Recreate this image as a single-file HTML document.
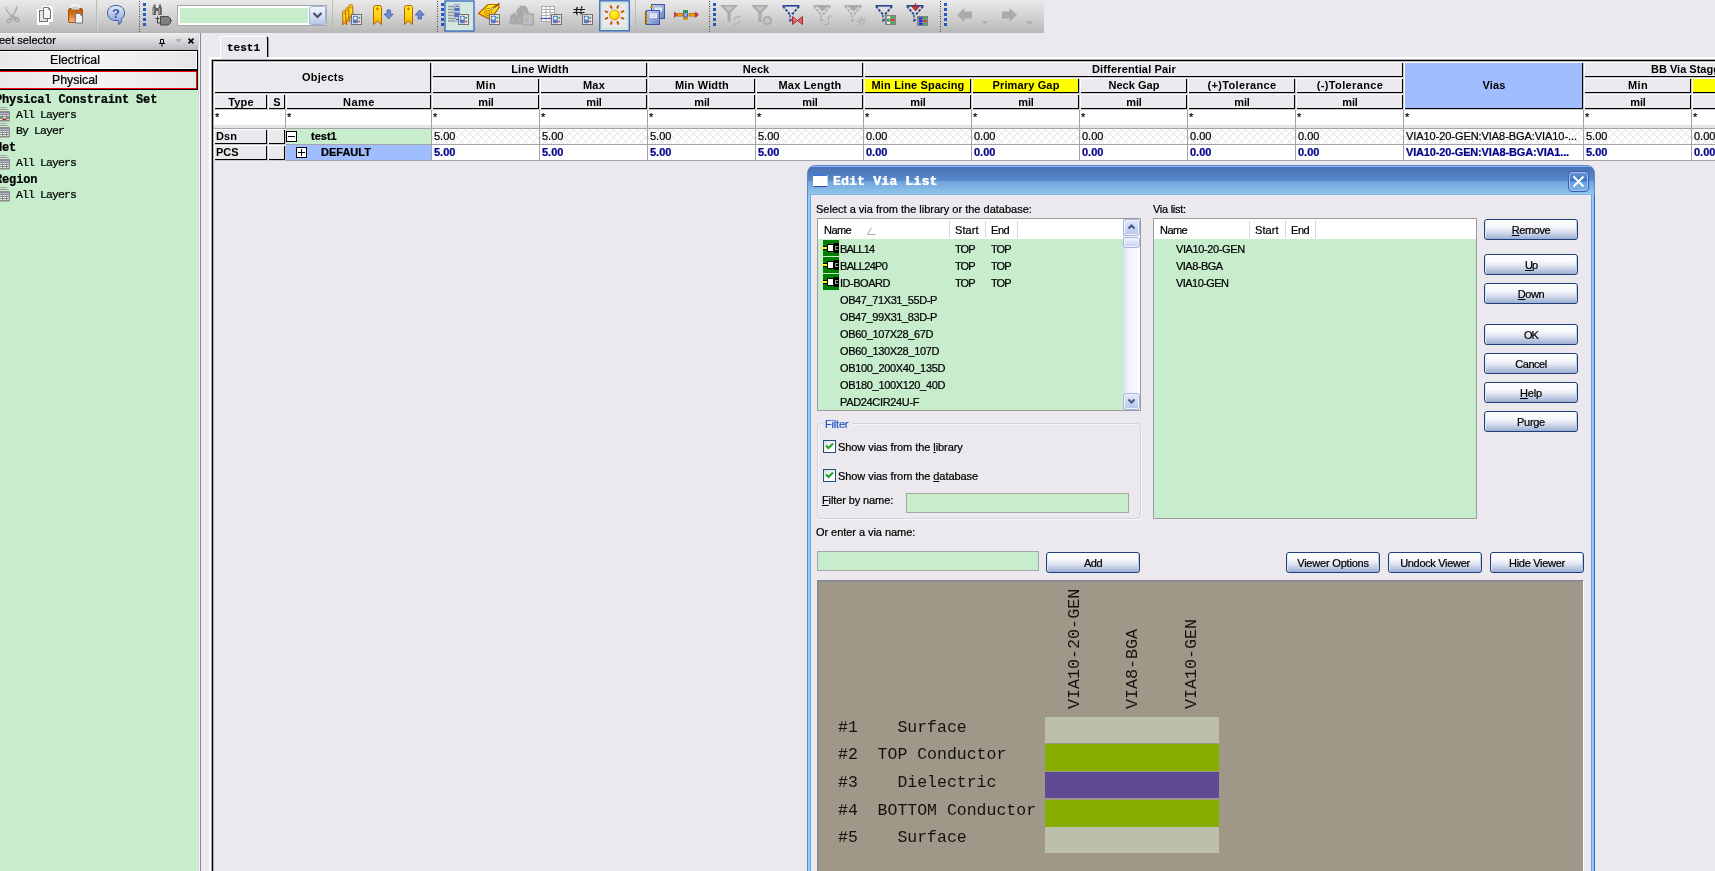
<!DOCTYPE html>
<html><head><meta charset="utf-8"><title>Constraint Manager</title>
<style>
*{box-sizing:border-box;margin:0;padding:0}
html,body{width:1715px;height:871px;overflow:hidden;background:#ebe9ed;font-family:"Liberation Sans",sans-serif;font-size:11px;color:#000}
.a{position:absolute}
.t{position:absolute;white-space:nowrap;line-height:1}
.t,.btn,.lbtn{-webkit-text-stroke:0.22px currentColor}
.mono{font-family:"Liberation Mono",monospace}
.b{font-weight:bold}
/* toolbar */
#tb{left:0;top:0;width:1044px;height:33px;background:linear-gradient(#e9e9e9 0%,#dcdcdc 30%,#c8c8c8 70%,#b7b7b7 100%)}
/* left pane */
#lp{left:0;top:33px;width:199px;height:838px;background:#c7edcc}
#lph{left:0;top:33px;width:199px;height:17px;background:linear-gradient(#eeeef0,#d6d6da 50%,#b8b8bc)}
.lbtn{left:-2px;width:200px;background:linear-gradient(90deg,#e8e8ea,#f4f4f6 50%,#e6e6e8);text-align:center;font-size:13px}
/* grid */
.hc{position:absolute;background:#ebe9ed;border-top:1px solid #fff;border-left:1px solid #fff;border-bottom:1px solid #c8c8cc;border-right:1px solid #c8c8cc;box-shadow:inset -1px -1px 0 0 #000;text-align:center;font-weight:bold;font-size:11px;white-space:nowrap;overflow:hidden}
.hy{background:#ffff00}
.hv{background:#a0bdff}
.fc{position:absolute;background:#fff;border-right:1px solid #a0a0a0;border-bottom:1px solid #b8b8b8;font-size:11px}
.dc{position:absolute;border-right:1px solid #a8a8a8;border-bottom:1px solid #a8a8a8;font-size:11px;padding-left:2px;white-space:nowrap;overflow:hidden}
.hatch{background-color:#fff;background-image:repeating-linear-gradient(45deg,transparent 0,transparent 4.95px,#dedede 4.95px,#dedede 5.66px),repeating-linear-gradient(-45deg,transparent 0,transparent 4.95px,#dedede 4.95px,#dedede 5.66px)}
.nv{color:#00008b;font-weight:bold;background:#fff}
/* dialog */
.btn{position:absolute;border:1px solid #1c3f7c;border-radius:3px;background:linear-gradient(#ffffff 0%,#f6f7fb 35%,#e2e7f2 55%,#bcc8e2 80%,#9eaed2 100%);text-align:center;font-size:11px;box-shadow:inset 0 1px 0 0 #fff,inset 1px 0 0 0 #e4e8f2,inset -1px 0 0 0 #c4cce0}
.lv{position:absolute;background:#c7edcc;border:1px solid #9c9c9c}
.inp{position:absolute;background:#c7edcc;border:1px solid #a5a5a5}
u{text-decoration:underline}
#root{position:absolute;left:0;top:0;width:1715px;height:871px;overflow:hidden;will-change:transform;transform:translateZ(0)}
</style></head><body><div id="root">

<div class="a" id="tb"></div>
<svg class="a" style="left:0;top:0" width="1044" height="33" viewBox="0 0 1044 33">
<defs>
<linearGradient id="gy" x1="0" y1="0" x2="0" y2="1"><stop offset="0" stop-color="#fff020"/><stop offset="0.6" stop-color="#ffd010"/><stop offset="1" stop-color="#f0a000"/></linearGradient>
<linearGradient id="gb" x1="0" y1="0" x2="0" y2="1"><stop offset="0" stop-color="#e8eefc"/><stop offset="1" stop-color="#7f9ad4"/></linearGradient>
<linearGradient id="gbr" x1="0" y1="0" x2="0" y2="1"><stop offset="0" stop-color="#b85808"/><stop offset="0.5" stop-color="#d87820"/><stop offset="1" stop-color="#f4c090"/></linearGradient>
<linearGradient id="gdd" x1="0" y1="0" x2="0" y2="1"><stop offset="0" stop-color="#f4f7fd"/><stop offset="0.5" stop-color="#d8e2f4"/><stop offset="1" stop-color="#b4c6e6"/></linearGradient>
<linearGradient id="gnb" x1="0" y1="0" x2="1" y2="1"><stop offset="0" stop-color="#c4d0f0"/><stop offset="1" stop-color="#6f86c4"/></linearGradient>
<radialGradient id="gsun" cx="0.4" cy="0.35" r="0.7"><stop offset="0" stop-color="#fff840"/><stop offset="0.7" stop-color="#ffd800"/><stop offset="1" stop-color="#f0a000"/></radialGradient>
</defs>
<g stroke="#a8aaac" fill="none" stroke-width="1.2"><path d="M6 7Q6 12 13 17"/><path d="M17 6Q17 12 10 17"/><path d="M16 7.5l-1.5 3" stroke-dasharray="1 1"/></g>
<g fill="#a8aaac"><ellipse cx="9.5" cy="20.5" rx="3.2" ry="2.4" transform="rotate(-35 9.5 20.5)"/><ellipse cx="16.5" cy="19.5" rx="3.4" ry="2.4" transform="rotate(35 16.5 19.5)"/><path d="M10 18.500l3.500 -3.500l3 3.500Z"/></g><circle cx="9.3" cy="20.8" r="0.9" fill="#d4d4d4"/><circle cx="17.2" cy="19.8" r="0.9" fill="#d4d4d4"/>
<path d="M37 9h5V6h9l2 2v14h-4v3H37Z" fill="#fff"/>
<rect x="39.5" y="10.5" width="8" height="11" fill="#e4e4e4" stroke="#707070"/>
<path d="M43.5 7.5h5l2 2v9h-7Z" fill="#f4f4f4" stroke="#707070"/><path d="M48.5 7.5v2h2" fill="none" stroke="#707070" stroke-width="0.8"/>
<path d="M71 8Q71 4.5 75.5 4.5Q80 4.5 80 8Z" fill="#fff" opacity="0.9"/>
<rect x="68.5" y="8.5" width="14" height="14" rx="1.5" fill="url(#gbr)" stroke="#a85000"/>
<path d="M71.5 9.5Q71.5 6.5 75.5 6.5Q79.5 6.5 79.5 9.5Z" fill="#d8d8d8" stroke="#b0b0b0" stroke-width="0.6"/>
<path d="M75.5 13.5h5l2 2v7.5h-7Z" fill="#f4f4f4" stroke="#787878"/><path d="M80.5 13.5v2h2" fill="none" stroke="#787878" stroke-width="0.8"/>
<rect x="96" y="0" width="1" height="31" fill="#b4c0b4"/><rect x="97" y="0" width="1" height="31" fill="#dcdcdc" opacity="0.6"/>
<path d="M116 5.5C121.5 5.5 124.5 9 124.5 13C124.5 16 123 18 121 19.2Q123 22 118.5 24.5Q119.5 22 118 20.3Q117 20.5 116 20.5C110.5 20.5 107.5 17 107.5 13C107.5 9 110.5 5.5 116 5.5Z" fill="url(#gb)" stroke="#3c5ca0" stroke-width="1"/>
<text x="116" y="18" font-family="Liberation Sans" font-weight="bold" font-size="13" text-anchor="middle" fill="#3c58a8">?</text>
<path d="M139.5 1V32" stroke="#404040" stroke-width="1" stroke-dasharray="1 1.5"/>
<g transform="translate(143,0)"><rect x="0" y="3" width="3" height="3" fill="#2858c0"/><rect x="0" y="8" width="3" height="3" fill="#2858c0"/><rect x="0" y="13" width="3" height="3" fill="#2858c0"/><rect x="0" y="18" width="3" height="3" fill="#2858c0"/><rect x="0" y="23" width="3" height="3" fill="#2858c0"/></g>
<g fill="#606060"><rect x="152.5" y="7" width="3.6" height="8" rx="0.8"/><rect x="158.2" y="7" width="3.6" height="8" rx="0.8"/><rect x="153.5" y="4.5" width="2" height="3"/><rect x="159" y="4.5" width="2" height="3"/><rect x="156" y="8" width="2.4" height="3"/></g>
<path d="M153.6 8v6M159.4 8v6" stroke="#b0b0b0" stroke-width="0.9"/>
<path d="M155.5 18.5h4M157.5 16.5v6.5h3" stroke="#404040" stroke-width="1" fill="none"/>
<path d="M160.5 16.5h7.5l2.5 2v4.5l-2.5 2h-7.5Z" fill="#808080" stroke="#484848"/><path d="M170.5 20.5h1.5" stroke="#484848"/>
<rect x="177.5" y="5.5" width="149" height="20" fill="#fff" stroke="#a4a8ac"/>
<rect x="180" y="8" width="128" height="15" fill="#c7edcc"/>
<rect x="309.5" y="6.5" width="16" height="18" rx="2" fill="url(#gdd)" stroke="#a0b4d8"/>
<path d="M313.5 13L317.5 17L321.5 13" stroke="#485068" stroke-width="2.2" fill="none"/>
<rect x="332" y="0" width="1" height="31" fill="#b4c0b4"/>
<g transform="translate(342.5,10.5) scale(0.5,0.74)"><path d="M0.5 2.5Q0.5 0.5 2.5 0.5H6.5Q8.5 0.5 8.5 2.5V19.5L4.5 16L0.5 19.5Z" fill="url(#gy)" stroke="#b86400" stroke-width="1" vector-effect="non-scaling-stroke"/><path d="M4.5 2.3v3M3 3.8h3" stroke="#d07800" stroke-width="1.2"/></g>
<g transform="translate(345.5,7.5) scale(0.5,0.74)"><path d="M0.5 2.5Q0.5 0.5 2.5 0.5H6.5Q8.5 0.5 8.5 2.5V19.5L4.5 16L0.5 19.5Z" fill="url(#gy)" stroke="#b86400" stroke-width="1" vector-effect="non-scaling-stroke"/><path d="M4.5 2.3v3M3 3.8h3" stroke="#d07800" stroke-width="1.2"/></g>
<g transform="translate(348.5,4.5) scale(0.5,0.74)"><path d="M0.5 2.5Q0.5 0.5 2.5 0.5H6.5Q8.5 0.5 8.5 2.5V19.5L4.5 16L0.5 19.5Z" fill="url(#gy)" stroke="#b86400" stroke-width="1" vector-effect="non-scaling-stroke"/><path d="M4.5 2.3v3M3 3.8h3" stroke="#d07800" stroke-width="1.2"/></g>
<g transform="translate(351,14)"><g transform="scale(0.9167)"><rect x="0.5" y="0.5" width="11" height="11" fill="#e8e8ec" stroke="#686868"/><rect x="2" y="2" width="5.5" height="8" rx="1" fill="#5a78c0"/><circle cx="4.7" cy="4.5" r="1.7" fill="#e8ecf8"/><path d="M9 3v2.4M7.8 4.2h2.4" stroke="#20b040" stroke-width="1.1"/><path d="M9 7v2.4M7.8 8.2h2.4" stroke="#e04040" stroke-width="1.1"/></g></g>
<g transform="translate(373,5)"><path d="M0.5 2.5Q0.5 0.5 2.5 0.5H6.5Q8.5 0.5 8.5 2.5V19.5L4.5 16L0.5 19.5Z" fill="url(#gy)" stroke="#b86400" stroke-width="1" vector-effect="non-scaling-stroke"/><path d="M4.5 2.3v3M3 3.8h3" stroke="#d07800" stroke-width="1.2"/></g>
<path d="M387 10h3.4v4h2.8l-4.5 5l-4.5 -5h2.8Z" fill="#6c8cd0" stroke="#3c5ca8" stroke-width="0.8"/>
<g transform="translate(404,5)"><path d="M0.5 2.5Q0.5 0.5 2.5 0.5H6.5Q8.5 0.5 8.5 2.5V19.5L4.5 16L0.5 19.5Z" fill="url(#gy)" stroke="#b86400" stroke-width="1" vector-effect="non-scaling-stroke"/><path d="M4.5 2.3v3M3 3.8h3" stroke="#d07800" stroke-width="1.2"/></g>
<path d="M418 19h3.4v-4h2.8l-4.5 -5l-4.5 5h2.8Z" fill="#6c8cd0" stroke="#3c5ca8" stroke-width="0.8"/>
<path d="M437.5 1V32" stroke="#404040" stroke-width="1" stroke-dasharray="1 1.5"/>
<g transform="translate(441,0)"><rect x="0" y="3" width="3" height="3" fill="#2858c0"/><rect x="0" y="8" width="3" height="3" fill="#2858c0"/><rect x="0" y="13" width="3" height="3" fill="#2858c0"/><rect x="0" y="18" width="3" height="3" fill="#2858c0"/><rect x="0" y="23" width="3" height="3" fill="#2858c0"/></g>
<rect x="445" y="1" width="29" height="30" fill="#d2e8de" stroke="#2c5cc0" stroke-width="1.2"/>
<path d="M448 6.5h7M448 9.5h7M448 12.500h7M448 15.500h7M448 18.500h7M448 21h7" stroke="#989898" stroke-width="1.4"/>
<rect x="454.5" y="4.500" width="5" height="17" fill="#c8d4f0" stroke="#8098d0" stroke-width="0.6"/><rect x="454.500" y="8" width="5" height="9" fill="#5070b8"/><rect x="454.500" y="11" width="5" height="1.5" fill="#c8d4f0"/>
<path d="M455.500 7.300l1.500 -1.500l1.500 1.500M455.500 18.500l1.500 1.500l1.500 -1.500" stroke="#304880" stroke-width="0.9" fill="none"/>
<g transform="translate(458,14)"><g transform="scale(0.9167)"><rect x="0.5" y="0.5" width="11" height="11" fill="#e8e8ec" stroke="#686868"/><rect x="2" y="2" width="5.5" height="8" rx="1" fill="#5a78c0"/><circle cx="4.7" cy="4.5" r="1.7" fill="#e8ecf8"/><path d="M9 3v2.4M7.8 4.2h2.4" stroke="#20b040" stroke-width="1.1"/><path d="M9 7v2.4M7.8 8.2h2.4" stroke="#e04040" stroke-width="1.1"/></g></g>
<path d="M478.500 13.500L488 4.500H497L499.500 7L490 19.500Z" fill="url(#gy)" stroke="#b86400" stroke-width="1.2"/>
<circle cx="488" cy="12" r="3.600" fill="none" stroke="#c88000" stroke-width="0.9"/><circle cx="488" cy="12" r="1.600" fill="none" stroke="#c88000" stroke-width="0.9"/>
<path d="M493 8L499.500 3.500" stroke="#a05800" stroke-width="1.8"/><circle cx="492.500" cy="8.500" r="1.200" fill="#e8e8e8" stroke="#806040" stroke-width="0.6"/>
<g transform="translate(489,14)"><g transform="scale(0.9167)"><rect x="0.5" y="0.5" width="11" height="11" fill="#e8e8ec" stroke="#686868"/><rect x="2" y="2" width="5.5" height="8" rx="1" fill="#5a78c0"/><circle cx="4.7" cy="4.5" r="1.7" fill="#e8ecf8"/><path d="M9 3v2.4M7.8 4.2h2.4" stroke="#20b040" stroke-width="1.1"/><path d="M9 7v2.4M7.8 8.2h2.4" stroke="#e04040" stroke-width="1.1"/></g></g>
<path d="M519 6.500Q520 5 522 5.500L525.500 6Q527 6.500 527.500 8.500L529 13L532.500 14.500V24.500H511Q509 24.500 509.300 22L510 17Q510.500 14.500 513 13.500L515.500 12.500Z" fill="#a8aaac"/>
<g transform="translate(522,13.500)"><rect x="0.5" y="0.5" width="11" height="11" fill="#b4b6b8" stroke="#a4a6a8"/><rect x="2.5" y="2.5" width="5" height="7" fill="none" stroke="#c4c6c8"/><path d="M9 3v2.4M7.8 4.2h2.4M9 7v2.4M7.8 8.2h2.4" stroke="#c4c6c8" stroke-width="1"/></g>
<circle cx="519.500" cy="7.500" r="0.700" fill="#d0d0d0"/><rect x="515" y="13" width="3" height="1.500" fill="#c4c6c8"/><circle cx="512.500" cy="19.500" r="0.600" fill="#c8c8c8"/><circle cx="519" cy="19.500" r="0.600" fill="#c8c8c8"/><rect x="523" y="13" width="3" height="1" fill="#c4c6c8"/>
<rect x="541.500" y="6.500" width="13" height="15" fill="#fff" stroke="#a8a8a8"/><path d="M541.500 9.500h13M541.500 12.500h13M541.500 15.500h13M541.500 18.500h13M546 6.500v15M550 6.500v15" stroke="#b0b0b0" stroke-width="1"/>
<path d="M540.500 18.500H552" stroke="#3858b0" stroke-width="1.200"/>
<g transform="translate(551,14)"><g transform="scale(0.9167)"><rect x="0.5" y="0.5" width="11" height="11" fill="#e8e8ec" stroke="#686868"/><rect x="2" y="2" width="5.5" height="8" rx="1" fill="#5a78c0"/><circle cx="4.7" cy="4.5" r="1.7" fill="#e8ecf8"/><path d="M9 3v2.4M7.8 4.2h2.4" stroke="#20b040" stroke-width="1.1"/><path d="M9 7v2.4M7.8 8.2h2.4" stroke="#e04040" stroke-width="1.1"/></g></g>
<path d="M573.500 9.500H585M573 12.500H584.500" stroke="#202020" stroke-width="1.100"/><path d="M577.500 7Q575.500 11 577.500 15.500M582 6.500Q580 11 581.500 15" stroke="#202020" stroke-width="1.500" fill="none" stroke-dasharray="2.2 0.600"/>
<g transform="translate(582,14)"><g transform="scale(0.9167)"><rect x="0.5" y="0.5" width="11" height="11" fill="#e8e8ec" stroke="#686868"/><rect x="2" y="2" width="5.5" height="8" rx="1" fill="#5a78c0"/><circle cx="4.7" cy="4.5" r="1.7" fill="#e8ecf8"/><path d="M9 3v2.4M7.8 4.2h2.4" stroke="#20b040" stroke-width="1.1"/><path d="M9 7v2.4M7.8 8.2h2.4" stroke="#e04040" stroke-width="1.1"/></g></g>
<rect x="599.800" y="0.800" width="29.500" height="30" fill="#d2e8de" stroke="#2c5cc0" stroke-width="1.200"/><rect x="603" y="4" width="23" height="23" fill="#ebe9ed"/>
<path d="M621.0 17.6L624.2 18.9" stroke="#c05800" stroke-width="2"/>
<path d="M617.2 21.4L618.6 24.7" stroke="#c05800" stroke-width="2"/>
<path d="M611.9 21.5L610.6 24.7" stroke="#c05800" stroke-width="2"/>
<path d="M608.1 17.7L604.8 19.1" stroke="#c05800" stroke-width="2"/>
<path d="M608.0 12.4L604.8 11.1" stroke="#c05800" stroke-width="2"/>
<path d="M611.8 8.6L610.4 5.3" stroke="#c05800" stroke-width="2"/>
<path d="M617.1 8.5L618.4 5.3" stroke="#c05800" stroke-width="2"/>
<path d="M620.9 12.3L624.2 10.9" stroke="#c05800" stroke-width="2"/>
<circle cx="614.500" cy="15" r="5" fill="url(#gsun)" stroke="#e09000" stroke-width="0.800"/>
<rect x="635" y="0" width="1" height="31" fill="#b4c0b4"/>
<rect x="651.500" y="4.500" width="13" height="14" fill="url(#gnb)" stroke="#4058a0"/><rect x="655" y="7.500" width="7" height="4" fill="#f0f2f8"/><path d="M656 9h5M656 10.500h5" stroke="#c0c8e0" stroke-width="0.600"/>
<path d="M650 7.500l3 -1" stroke="#e0a000" stroke-width="1.400"/>
<rect x="646.500" y="10.500" width="13" height="14" fill="url(#gnb)" stroke="#4058a0"/><rect x="650" y="13.500" width="7" height="4.500" fill="#f0f2f8"/><path d="M651 15h5M651 16.500h5" stroke="#c0c8e0" stroke-width="0.600"/>
<path d="M644.500 14l3 -1M644.500 17l3 -1M644.500 20l3 -1M644.500 23l3 -1" stroke="#e0a000" stroke-width="1.400"/><path d="M645.500 11v13.500" stroke="#805020" stroke-width="0.800"/>
<path d="M674.500 12L677 14.700L674.500 17.500Z" fill="#d03040" stroke="#b02030" stroke-width="0.600"/><path d="M698.500 14.700L695.500 12V17.500Z" fill="#d03040" stroke="#b02030" stroke-width="0.600"/>
<rect x="677" y="13.300" width="6" height="2.800" fill="#f0a800" stroke="#a05000" stroke-width="0.600"/><rect x="689" y="13.300" width="6" height="2.800" fill="#f0a800" stroke="#a05000" stroke-width="0.600"/>
<rect x="683" y="10" width="5" height="9.500" fill="#4868b8"/><rect x="683" y="10" width="5" height="2.200" fill="#20a040"/><rect x="683" y="17.300" width="5" height="2.200" fill="#f09000"/><path d="M684 13l3 3.500M687 13l-3 3.500" stroke="#e8ecf8" stroke-width="0.800"/>
<path d="M709.5 1V32" stroke="#404040" stroke-width="1" stroke-dasharray="1 1.5"/>
<g transform="translate(713,0)"><rect x="0" y="3" width="3" height="3" fill="#2858c0"/><rect x="0" y="8" width="3" height="3" fill="#2858c0"/><rect x="0" y="13" width="3" height="3" fill="#2858c0"/><rect x="0" y="18" width="3" height="3" fill="#2858c0"/><rect x="0" y="23" width="3" height="3" fill="#2858c0"/></g>
<g transform="translate(720,5)"><path d="M0 0H18L10.5 8V17H7.5V8Z" fill="#a8aaac"/><path d="M4 1.600H14L9 6.500Z" fill="#c4c6c8"/></g>
<g stroke="#b4b6b8" fill="none" stroke-width="1.300"><path d="M733.500 20.500Q735 16.500 739 17"/><path d="M740 20.500Q738.500 24 734.500 24"/></g><path d="M737.500 15l3 1l-2 2.500ZM736 26l-3 -1l2 -2.500Z" fill="#b4b6b8"/>
<g transform="translate(751,5)"><path d="M0 0H18L10.5 8V17H7.5V8Z" fill="#a8aaac"/><path d="M4 1.600H14L9 6.500Z" fill="#c4c6c8"/></g>
<circle cx="767.500" cy="20.500" r="3.600" fill="none" stroke="#a8aaac" stroke-width="2"/><path d="M765 18l5 5M770 18l-5 5" stroke="#b8babc" stroke-width="0.800"/>
<g stroke="#24448c" fill="none"><g transform="translate(782,5)"><path d="M0.5 0.8H17.5" stroke-width="1.6"/><path d="M1 1.5L8 9.5M17 1.5L10 9.5" stroke-width="1.8" stroke-dasharray="2.6 1.3"/><path d="M8 10V16" stroke-width="1.3" stroke-dasharray="2.5 1.3"/><path d="M7.5 16.5l2.5 -2" stroke-width="1.3"/></g></g>
<path d="M792.500 16.500L797.500 20.500L792.500 24.500ZM802.500 16.500L797.500 20.500L802.500 24.500Z" fill="#e06060" stroke="#b02828" stroke-width="1"/><path d="M794 18.500l2.500 2" stroke="#f8c0c0" stroke-width="0.800"/>
<g stroke="#a8aaac" fill="none"><g transform="translate(813,5)"><path d="M0.5 0.8H17.5" stroke-width="1.6"/><path d="M1 1.5L8 9.5M17 1.5L10 9.5" stroke-width="1.8" stroke-dasharray="2.6 1.3"/><path d="M8 10V16" stroke-width="1.3" stroke-dasharray="2.5 1.3"/><path d="M7.5 16.5l2.5 -2" stroke-width="1.3"/></g></g><path d="M816.500 6h12l-6 5.500Z" fill="#a8aaac"/>
<path d="M825 24.500h3.500V16h3.500" stroke="#a8aaac" stroke-width="1.200" fill="none" stroke-dasharray="3 1"/>
<g stroke="#a8aaac" fill="none"><g transform="translate(844,5)"><path d="M0.5 0.8H17.5" stroke-width="1.6"/><path d="M1 1.5L8 9.5M17 1.5L10 9.5" stroke-width="1.8" stroke-dasharray="2.6 1.3"/><path d="M8 10V16" stroke-width="1.3" stroke-dasharray="2.5 1.3"/><path d="M7.5 16.5l2.5 -2" stroke-width="1.3"/></g></g><path d="M847.500 6h12l-6 5.500Z" fill="#a8aaac"/>
<circle cx="861.500" cy="21.500" r="2.600" fill="none" stroke="#b0b2b4" stroke-width="1.400"/><path d="M861.500 16v11M856 21.500h11M857.700 17.700l7.600 7.600M865.300 17.700l-7.600 7.600" stroke="#b0b2b4" stroke-width="1" stroke-dasharray="2 2.200"/>
<g stroke="#24448c" fill="none"><g transform="translate(875,5)"><path d="M0.5 0.8H17.5" stroke-width="1.6"/><path d="M1 1.5L8 9.5M17 1.5L10 9.5" stroke-width="1.8" stroke-dasharray="2.6 1.3"/><path d="M8 10V16" stroke-width="1.3" stroke-dasharray="2.5 1.3"/><path d="M7.5 16.5l2.5 -2" stroke-width="1.3"/></g></g>
<rect x="885.500" y="15.500" width="10" height="9" fill="#909090" stroke="#808080"/><rect x="887" y="16.500" width="3" height="1.800" fill="#fff"/><rect x="891" y="16.500" width="3.500" height="1.800" fill="#20c040"/><rect x="887" y="19.200" width="3" height="1.800" fill="#20c040"/><rect x="891" y="19.200" width="3.500" height="1.800" fill="#f02020"/><rect x="887" y="21.900" width="3" height="1.800" fill="#fff"/><rect x="891" y="21.900" width="3.500" height="1.800" fill="#20c040"/>
<g stroke="#24448c" fill="none"><g transform="translate(906,5)"><path d="M0.5 0.8H17.5" stroke-width="1.6"/><path d="M1 1.5L8 9.5M17 1.5L10 9.5" stroke-width="1.8" stroke-dasharray="2.6 1.3"/><path d="M8 10V16" stroke-width="1.3" stroke-dasharray="2.5 1.3"/><path d="M7.5 16.5l2.5 -2" stroke-width="1.3"/></g></g>
<path d="M915.500 3.500v3" stroke="#c02020" stroke-width="1.400"/><path d="M911.500 6.500h8l-4 4.500Z" fill="#c83030" stroke="#901818" stroke-width="0.500"/>
<rect x="917.500" y="16.500" width="10" height="9" fill="#909090" stroke="#808080"/><rect x="919" y="17.500" width="3.500" height="1.800" fill="#1020f0"/><rect x="923.500" y="17.500" width="3" height="1.800" fill="#20c040"/><rect x="919" y="20.200" width="3.500" height="1.800" fill="#1020f0"/><rect x="923.500" y="20.200" width="3" height="1.800" fill="#f02020"/><rect x="919" y="22.900" width="3.500" height="1.800" fill="#1020f0"/><rect x="923.500" y="22.900" width="3" height="1.800" fill="#20c040"/>
<path d="M940.5 1V32" stroke="#404040" stroke-width="1" stroke-dasharray="1 1.5"/>
<g transform="translate(944,0)"><rect x="0" y="3" width="3" height="3" fill="#2858c0"/><rect x="0" y="8" width="3" height="3" fill="#2858c0"/><rect x="0" y="13" width="3" height="3" fill="#2858c0"/><rect x="0" y="18" width="3" height="3" fill="#2858c0"/><rect x="0" y="23" width="3" height="3" fill="#2858c0"/></g>
<path d="M957 15L964.500 8V11.500H972V18.500H964.500V22Z" fill="#a8aaac"/><path d="M981 21h7.500l-3.700 4Z" fill="#b0b2b4"/>
<path d="M1017 15L1009.500 8V11.500H1002V18.500H1009.500V22Z" fill="#a8aaac"/><path d="M1026 21h7.500l-3.700 4Z" fill="#b0b2b4"/>
</svg>
<div class="a" id="lp"></div>
<div class="a" id="lph"></div>
<div class="t" style="left:-1px;top:35px;font-size:11px">eet selector</div>
<svg class="a" style="left:158px;top:38px" width="8" height="9" viewBox="0 0 8 9"><path d="M2.500 1.500h3M2.500 1.500v4M5.500 1.500v4M1 5.500h6M4 5.500v3" stroke="#000" stroke-width="1" fill="none"/></svg>
<svg class="a" style="left:175px;top:39px" width="7" height="4" viewBox="0 0 7 4"><path d="M0 0h7L3.5 4z" fill="#b0b0b4"/></svg>
<svg class="a" style="left:187px;top:38px" width="8" height="6" viewBox="0 0 8 6"><path d="M1.500 0.700l5 4.600M6.500 0.700l-5 4.600" stroke="#000" stroke-width="1.600" fill="none"/></svg>
<div class="a lbtn" style="top:50px;height:20px;border:1px solid #000;box-shadow:inset 0 0 0 1px #fff;line-height:18px;text-align:left;padding-left:51px;font-size:12.3px">Electrical</div>
<div class="a lbtn" style="top:70px;height:20px;border:1px solid #000;border-top:1px solid #000;line-height:18px;text-align:left"><div class="a" style="left:0;top:0;right:0;bottom:0;border:1px solid #f00"></div><span style="padding-left:53px;font-size:12.3px">Physical</span></div>
<div class="a" style="left:198px;top:33px;width:1px;height:838px;background:#d8d8dc"></div>
<div class="a" style="left:199px;top:33px;width:1px;height:838px;background:#f4f4f6"></div>
<div class="a" style="left:200px;top:33px;width:1px;height:838px;background:#88888c"></div>
<div class="t mono b" style="left:-5px;top:93.5px;font-size:12px;letter-spacing:-0.15px">Physical Constraint Set</div>
<svg class="a" style="left:-2px;top:106px" width="13" height="16" viewBox="0 0 13 16"><path d="M2 1.5h7" stroke="#a8a8a8"/><path d="M1 3.5h9.5" stroke="#989898"/><rect x="0" y="5" width="12" height="10.5" rx="1" fill="#8c8c8c"/><path d="M1 7.5h10M1 9.5h10M1 11.5h10M1 13.5h10" stroke="#e4e4e8" stroke-width="1"/><path d="M4.5 6v9M8.5 6v9" stroke="#8c8c8c" stroke-width="1"/><path d="M1 7.5h10" stroke="#aab4e0" stroke-width="1"/><path d="M1 11.5h3M9 11.5h2" stroke="#2eb82e" stroke-width="1"/><path d="M5 13.5h3" stroke="#e02020" stroke-width="1"/></svg>
<div class="t mono" style="left:16px;top:109px;font-size:11.5px;letter-spacing:-0.9px">All Layers</div>
<svg class="a" style="left:-2px;top:122px" width="13" height="16" viewBox="0 0 13 16"><path d="M2 1.5h7" stroke="#a8a8a8"/><path d="M1 3.5h9.5" stroke="#989898"/><rect x="0" y="5" width="12" height="10.5" rx="1" fill="#8c8c8c"/><path d="M1 7.5h10M1 9.5h10M1 11.5h10M1 13.5h10" stroke="#e4e4e8" stroke-width="1"/><path d="M4.5 6v9M8.5 6v9" stroke="#8c8c8c" stroke-width="1"/><path d="M1 7.5h10" stroke="#aab4e0" stroke-width="1"/></svg>
<div class="t mono" style="left:16px;top:125px;font-size:11.5px;letter-spacing:-0.9px">By Layer</div>
<div class="t mono b" style="left:-5px;top:141.5px;font-size:12px;letter-spacing:-0.15px">Net</div>
<svg class="a" style="left:-2px;top:154px" width="13" height="16" viewBox="0 0 13 16"><path d="M2 1.5h7" stroke="#a8a8a8"/><path d="M1 3.5h9.5" stroke="#989898"/><rect x="0" y="5" width="12" height="10.5" rx="1" fill="#8c8c8c"/><path d="M1 7.5h10M1 9.5h10M1 11.5h10M1 13.5h10" stroke="#e4e4e8" stroke-width="1"/><path d="M4.5 6v9M8.5 6v9" stroke="#8c8c8c" stroke-width="1"/><path d="M1 7.5h10" stroke="#aab4e0" stroke-width="1"/></svg>
<div class="t mono" style="left:16px;top:157px;font-size:11.5px;letter-spacing:-0.9px">All Layers</div>
<div class="t mono b" style="left:-5px;top:173.5px;font-size:12px;letter-spacing:-0.15px">Region</div>
<svg class="a" style="left:-2px;top:186px" width="13" height="16" viewBox="0 0 13 16"><path d="M2 1.5h7" stroke="#a8a8a8"/><path d="M1 3.5h9.5" stroke="#989898"/><rect x="0" y="5" width="12" height="10.5" rx="1" fill="#8c8c8c"/><path d="M1 7.5h10M1 9.5h10M1 11.5h10M1 13.5h10" stroke="#e4e4e8" stroke-width="1"/><path d="M4.5 6v9M8.5 6v9" stroke="#8c8c8c" stroke-width="1"/><path d="M1 7.5h10" stroke="#aab4e0" stroke-width="1"/></svg>
<div class="t mono" style="left:16px;top:189px;font-size:11.5px;letter-spacing:-0.9px">All Layers</div>
<div class="a" style="left:220px;top:36px;width:48px;height:22px;background:#ebe9ed;border-top:1px solid #fff;border-left:1px solid #fff;border-right:1px solid #000;border-radius:3px 3px 0 0;box-shadow:1px 0 0 #9c9c9c"></div>
<div class="t mono b" style="left:227px;top:43px;font-size:11px;letter-spacing:0px">test1</div>
<div class="a" style="left:209px;top:57px;width:1506px;height:814px;border-left:2px solid #fff;border-top:2px solid #fff"></div>
<div class="a" style="left:211px;top:59px;width:1504px;height:812px;border-left:1px solid #a8a8ac;border-top:1px solid #a8a8ac"></div>
<div class="a" style="left:212px;top:60px;width:1503px;height:811px;border-left:1px solid #000;border-top:1px solid #000;background:#ebe9ed"></div>
<div class="a" style="left:213px;top:61px;width:1502px;height:810px;border-left:1px solid #b4b4b8;border-top:1px solid #b4b4b8"></div>
<div class="a" style="left:221px;top:57px;width:46px;height:2px;background:#ebe9ed"></div>
<div class="hc " style="left:214px;top:62px;width:218px;height:32px;line-height:29px;font-size:11px;letter-spacing:0.236px;">Objects</div>
<div class="hc " style="left:214px;top:94px;width:54px;height:16px;line-height:13px;font-size:11px;padding-top:1px;letter-spacing:0.161px;">Type</div>
<div class="hc " style="left:268px;top:94px;width:18px;height:16px;line-height:13px;font-size:11px;padding-top:1px;">S</div>
<div class="hc " style="left:286px;top:94px;width:146px;height:16px;line-height:13px;font-size:11px;padding-top:1px;letter-spacing:0.51px;">Name</div>
<div class="hc " style="left:432px;top:62px;width:216px;height:16px;line-height:13px;font-size:11px;letter-spacing:0.139px;">Line Width</div>
<div class="hc " style="left:648px;top:62px;width:216px;height:16px;line-height:13px;font-size:11px;letter-spacing:0.051px;">Neck</div>
<div class="hc " style="left:864px;top:62px;width:540px;height:16px;line-height:13px;font-size:11px;letter-spacing:0.159px;">Differential Pair</div>
<div class="hc hv" style="left:1404px;top:62px;width:180px;height:48px;line-height:45px;font-size:11px;letter-spacing:0.143px;">Vias</div>
<div class="hc " style="left:1584px;top:62px;width:408px;height:16px;line-height:13px;font-size:11px;text-align:left;padding-left:66px;">BB Via Stagger</div>
<div class="hc " style="left:432px;top:78px;width:108px;height:16px;line-height:13px;font-size:11px;letter-spacing:0.354px;">Min</div>
<div class="hc " style="left:432px;top:94px;width:108px;height:16px;line-height:13px;font-size:11px;padding-top:1px;letter-spacing:-0.131px;">mil</div>
<div class="hc " style="left:540px;top:78px;width:108px;height:16px;line-height:13px;font-size:11px;letter-spacing:0.2px;">Max</div>
<div class="hc " style="left:540px;top:94px;width:108px;height:16px;line-height:13px;font-size:11px;padding-top:1px;letter-spacing:-0.131px;">mil</div>
<div class="hc " style="left:648px;top:78px;width:108px;height:16px;line-height:13px;font-size:11px;letter-spacing:0.174px;">Min Width</div>
<div class="hc " style="left:648px;top:94px;width:108px;height:16px;line-height:13px;font-size:11px;padding-top:1px;letter-spacing:-0.131px;">mil</div>
<div class="hc " style="left:756px;top:78px;width:108px;height:16px;line-height:13px;font-size:11px;letter-spacing:0.189px;">Max Length</div>
<div class="hc " style="left:756px;top:94px;width:108px;height:16px;line-height:13px;font-size:11px;padding-top:1px;letter-spacing:-0.131px;">mil</div>
<div class="hc hy" style="left:864px;top:78px;width:108px;height:16px;line-height:13px;font-size:11px;letter-spacing:0.159px;">Min Line Spacing</div>
<div class="hc " style="left:864px;top:94px;width:108px;height:16px;line-height:13px;font-size:11px;padding-top:1px;letter-spacing:-0.131px;">mil</div>
<div class="hc hy" style="left:972px;top:78px;width:108px;height:16px;line-height:13px;font-size:11px;letter-spacing:0.144px;">Primary Gap</div>
<div class="hc " style="left:972px;top:94px;width:108px;height:16px;line-height:13px;font-size:11px;padding-top:1px;letter-spacing:-0.131px;">mil</div>
<div class="hc " style="left:1080px;top:78px;width:108px;height:16px;line-height:13px;font-size:11px;letter-spacing:0.032px;">Neck Gap</div>
<div class="hc " style="left:1080px;top:94px;width:108px;height:16px;line-height:13px;font-size:11px;padding-top:1px;letter-spacing:-0.131px;">mil</div>
<div class="hc " style="left:1188px;top:78px;width:108px;height:16px;line-height:13px;font-size:11px;letter-spacing:0.342px;">(+)Tolerance</div>
<div class="hc " style="left:1188px;top:94px;width:108px;height:16px;line-height:13px;font-size:11px;padding-top:1px;letter-spacing:-0.131px;">mil</div>
<div class="hc " style="left:1296px;top:78px;width:108px;height:16px;line-height:13px;font-size:11px;letter-spacing:0.363px;">(-)Tolerance</div>
<div class="hc " style="left:1296px;top:94px;width:108px;height:16px;line-height:13px;font-size:11px;padding-top:1px;letter-spacing:-0.131px;">mil</div>
<div class="hc " style="left:1584px;top:78px;width:108px;height:16px;line-height:13px;font-size:11px;letter-spacing:0.354px;">Min</div>
<div class="hc " style="left:1584px;top:94px;width:108px;height:16px;line-height:13px;font-size:11px;padding-top:1px;letter-spacing:-0.131px;">mil</div>
<div class="hc hy" style="left:1692px;top:78px;width:108px;height:16px;line-height:13px;font-size:11px;"></div>
<div class="hc " style="left:1692px;top:94px;width:108px;height:16px;line-height:13px;font-size:11px;padding-top:1px;"></div>
<div class="a" style="left:214px;top:110px;width:1501px;height:15px;background:#fff"></div>
<div class="a" style="left:214px;top:125px;width:1501px;height:3px;background:#e6e4e9"></div>
<div class="a" style="left:214px;top:128px;width:1501px;height:1px;background:#a4a4a8"></div>
<div class="a" style="left:285px;top:110px;width:1px;height:51px;background:#a4a4a8"></div>
<div class="a" style="left:431px;top:110px;width:1px;height:51px;background:#a4a4a8"></div>
<div class="a" style="left:539px;top:110px;width:1px;height:51px;background:#a4a4a8"></div>
<div class="a" style="left:647px;top:110px;width:1px;height:51px;background:#a4a4a8"></div>
<div class="a" style="left:755px;top:110px;width:1px;height:51px;background:#a4a4a8"></div>
<div class="a" style="left:863px;top:110px;width:1px;height:51px;background:#a4a4a8"></div>
<div class="a" style="left:971px;top:110px;width:1px;height:51px;background:#a4a4a8"></div>
<div class="a" style="left:1079px;top:110px;width:1px;height:51px;background:#a4a4a8"></div>
<div class="a" style="left:1187px;top:110px;width:1px;height:51px;background:#a4a4a8"></div>
<div class="a" style="left:1295px;top:110px;width:1px;height:51px;background:#a4a4a8"></div>
<div class="a" style="left:1403px;top:110px;width:1px;height:51px;background:#a4a4a8"></div>
<div class="a" style="left:1583px;top:110px;width:1px;height:51px;background:#a4a4a8"></div>
<div class="a" style="left:1691px;top:110px;width:1px;height:51px;background:#a4a4a8"></div>
<div class="t" style="left:215px;top:112px;font-size:11px">*</div>
<div class="t" style="left:287px;top:112px;font-size:11px">*</div>
<div class="t" style="left:433px;top:112px;font-size:11px">*</div>
<div class="t" style="left:541px;top:112px;font-size:11px">*</div>
<div class="t" style="left:649px;top:112px;font-size:11px">*</div>
<div class="t" style="left:757px;top:112px;font-size:11px">*</div>
<div class="t" style="left:865px;top:112px;font-size:11px">*</div>
<div class="t" style="left:973px;top:112px;font-size:11px">*</div>
<div class="t" style="left:1081px;top:112px;font-size:11px">*</div>
<div class="t" style="left:1189px;top:112px;font-size:11px">*</div>
<div class="t" style="left:1297px;top:112px;font-size:11px">*</div>
<div class="t" style="left:1405px;top:112px;font-size:11px">*</div>
<div class="t" style="left:1585px;top:112px;font-size:11px">*</div>
<div class="t" style="left:1693px;top:112px;font-size:11px">*</div>
<div class="hc " style="left:214px;top:129px;width:54px;height:16px;line-height:13px;font-size:11px;text-align:left;padding-left:1px;letter-spacing:0.073px;">Dsn</div>
<div class="hc " style="left:268px;top:129px;width:18px;height:16px;line-height:13px;font-size:11px;"></div>
<div class="hc " style="left:214px;top:145px;width:54px;height:16px;line-height:13px;font-size:11px;text-align:left;padding-left:1px;letter-spacing:-0.039px;">PCS</div>
<div class="hc " style="left:268px;top:145px;width:18px;height:16px;line-height:13px;font-size:11px;"></div>
<div class="a" style="left:286px;top:129px;width:145px;height:15px;background:#c7edcc"></div>
<div class="a" style="left:286px;top:145px;width:145px;height:15px;background:#a0bdff"></div>
<div class="a" style="left:286px;top:144px;width:1429px;height:1px;background:#a4a4a8"></div>
<div class="a" style="left:286px;top:160px;width:1429px;height:1px;background:#a4a4a8"></div>
<div class="a" style="left:286px;top:131px;width:11px;height:11px;border:1px solid #000;background:#fff"></div><div class="a" style="left:288px;top:136px;width:7px;height:1px;background:#000"></div>
<div class="a" style="left:296px;top:147px;width:11px;height:11px;border:1px solid #000;background:#fff"></div><div class="a" style="left:298px;top:152px;width:7px;height:1px;background:#000"></div><div class="a" style="left:301px;top:149px;width:1px;height:7px;background:#000"></div>
<div class="t b" style="left:311px;top:131px;font-size:11px">test1</div>
<div class="t b" style="left:321px;top:147px;font-size:11px">DEFAULT</div>
<div class="a hatch" style="left:432px;top:129px;width:107px;height:15px"></div>
<div class="a" style="left:432px;top:145px;width:107px;height:15px;background:#fff"></div>
<div class="t" style="left:434px;top:131px;font-size:11px;">5.00</div>
<div class="t b" style="left:434px;top:147px;font-size:11px;color:#00008b;">5.00</div>
<div class="a hatch" style="left:540px;top:129px;width:107px;height:15px"></div>
<div class="a" style="left:540px;top:145px;width:107px;height:15px;background:#fff"></div>
<div class="t" style="left:542px;top:131px;font-size:11px;">5.00</div>
<div class="t b" style="left:542px;top:147px;font-size:11px;color:#00008b;">5.00</div>
<div class="a hatch" style="left:648px;top:129px;width:107px;height:15px"></div>
<div class="a" style="left:648px;top:145px;width:107px;height:15px;background:#fff"></div>
<div class="t" style="left:650px;top:131px;font-size:11px;">5.00</div>
<div class="t b" style="left:650px;top:147px;font-size:11px;color:#00008b;">5.00</div>
<div class="a hatch" style="left:756px;top:129px;width:107px;height:15px"></div>
<div class="a" style="left:756px;top:145px;width:107px;height:15px;background:#fff"></div>
<div class="t" style="left:758px;top:131px;font-size:11px;">5.00</div>
<div class="t b" style="left:758px;top:147px;font-size:11px;color:#00008b;">5.00</div>
<div class="a hatch" style="left:864px;top:129px;width:107px;height:15px"></div>
<div class="a" style="left:864px;top:145px;width:107px;height:15px;background:#fff"></div>
<div class="t" style="left:866px;top:131px;font-size:11px;">0.00</div>
<div class="t b" style="left:866px;top:147px;font-size:11px;color:#00008b;">0.00</div>
<div class="a hatch" style="left:972px;top:129px;width:107px;height:15px"></div>
<div class="a" style="left:972px;top:145px;width:107px;height:15px;background:#fff"></div>
<div class="t" style="left:974px;top:131px;font-size:11px;">0.00</div>
<div class="t b" style="left:974px;top:147px;font-size:11px;color:#00008b;">0.00</div>
<div class="a hatch" style="left:1080px;top:129px;width:107px;height:15px"></div>
<div class="a" style="left:1080px;top:145px;width:107px;height:15px;background:#fff"></div>
<div class="t" style="left:1082px;top:131px;font-size:11px;">0.00</div>
<div class="t b" style="left:1082px;top:147px;font-size:11px;color:#00008b;">0.00</div>
<div class="a hatch" style="left:1188px;top:129px;width:107px;height:15px"></div>
<div class="a" style="left:1188px;top:145px;width:107px;height:15px;background:#fff"></div>
<div class="t" style="left:1190px;top:131px;font-size:11px;">0.00</div>
<div class="t b" style="left:1190px;top:147px;font-size:11px;color:#00008b;">0.00</div>
<div class="a hatch" style="left:1296px;top:129px;width:107px;height:15px"></div>
<div class="a" style="left:1296px;top:145px;width:107px;height:15px;background:#fff"></div>
<div class="t" style="left:1298px;top:131px;font-size:11px;">0.00</div>
<div class="t b" style="left:1298px;top:147px;font-size:11px;color:#00008b;">0.00</div>
<div class="a hatch" style="left:1404px;top:129px;width:179px;height:15px"></div>
<div class="a" style="left:1404px;top:145px;width:179px;height:15px;background:#fff"></div>
<div class="t" style="left:1406px;top:131px;font-size:11px;letter-spacing:-0.065px">VIA10-20-GEN:VIA8-BGA:VIA10-...</div>
<div class="t b" style="left:1406px;top:147px;font-size:11px;color:#00008b;letter-spacing:-0.155px">VIA10-20-GEN:VIA8-BGA:VIA1...</div>
<div class="a hatch" style="left:1584px;top:129px;width:107px;height:15px"></div>
<div class="a" style="left:1584px;top:145px;width:107px;height:15px;background:#fff"></div>
<div class="t" style="left:1586px;top:131px;font-size:11px;">5.00</div>
<div class="t b" style="left:1586px;top:147px;font-size:11px;color:#00008b;">5.00</div>
<div class="a hatch" style="left:1692px;top:129px;width:107px;height:15px"></div>
<div class="a" style="left:1692px;top:145px;width:107px;height:15px;background:#fff"></div>
<div class="t" style="left:1694px;top:131px;font-size:11px;">0.00</div>
<div class="t b" style="left:1694px;top:147px;font-size:11px;color:#00008b;">0.00</div>
<div class="a" style="left:807px;top:165px;width:788px;height:720px;border-radius:8px 8px 0 0;background:#ebe9ed;border:1px solid #5a8ad8;box-shadow:inset 0 0 0 1px #a8ccf4, inset 0 0 0 3px #7cb0ee, inset 0 0 0 4px #5f96dc"></div>
<div class="a" style="left:808px;top:166px;width:786px;height:29px;border-radius:6px 6px 0 0;background:linear-gradient(#8cb4e8 0%,#8cb4e8 3.4%,#4a72b6 4%,#4f7abc 25%,#5584c6 40%,#5a8ccc 50%,#6fa2dc 52%,#80b4e4 75%,#92c6ea 96%,#78a8e4 100%)"></div>
<div class="a" style="left:811px;top:195px;width:780px;height:676px;background:#ebe9ed"></div>
<div class="a" style="left:807px;top:195px;width:1px;height:676px;background:#4e90e0"></div>
<div class="a" style="left:808px;top:195px;width:1px;height:676px;background:#98c8f0"></div>
<div class="a" style="left:809px;top:195px;width:1px;height:676px;background:#a0ccf0"></div>
<div class="a" style="left:810px;top:195px;width:1px;height:676px;background:#6aa0e8"></div>
<div class="a" style="left:1591px;top:195px;width:1px;height:676px;background:#6aa0e8"></div>
<div class="a" style="left:1592px;top:195px;width:1px;height:676px;background:#a0ccf0"></div>
<div class="a" style="left:1593px;top:195px;width:1px;height:676px;background:#88bcf0"></div>
<div class="a" style="left:1594px;top:195px;width:1px;height:676px;background:#3c6cd0"></div>
<div class="a" style="left:813px;top:174px;width:15px;height:13px;background:#fff;border-top:2px solid #3c78d8;border-bottom:1px solid #2c4c9c;border-right:1px solid #c8d4f0;border-radius:1px"></div>
<div class="t mono b" style="left:833px;top:175px;font-size:13.4px;color:#fff;letter-spacing:0px;text-shadow:0 0 1px #dce8f8">Edit Via List</div>
<div class="a" style="left:1568px;top:171px;width:21px;height:21px;border:1px solid #3a5eb4;border-radius:4px;box-shadow:inset 0 0 0 1px #a4c0ea;background:linear-gradient(#6a94d6 0%,#4a80cc 30%,#3876cc 47%,#6aa0e0 53%,#80b2e6 100%)"></div>
<svg class="a" style="left:1572px;top:175px" width="13" height="13" viewBox="0 0 13 13"><path d="M1.5 1.5l10 10M11.5 1.5L1.5 11.5" stroke="#fff" stroke-width="2.1" fill="none"/></svg>
<div class="t" style="left:816px;top:204px;font-size:11px;">Select a via from the library or the database:</div>
<div class="t" style="left:1153px;top:204px;font-size:11px;letter-spacing:-0.273px;">Via list:</div>
<div class="lv" style="left:817px;top:218px;width:324px;height:193px"></div>
<div class="a" style="left:818px;top:219px;width:305px;height:20px;background:#fff"></div>
<div class="a" style="left:949px;top:221px;width:1px;height:17px;background:#d8d8dc"></div>
<div class="a" style="left:950px;top:221px;width:1px;height:17px;background:#fff"></div>
<div class="a" style="left:985px;top:221px;width:1px;height:17px;background:#d8d8dc"></div>
<div class="a" style="left:986px;top:221px;width:1px;height:17px;background:#fff"></div>
<div class="a" style="left:1017px;top:221px;width:1px;height:17px;background:#d8d8dc"></div>
<div class="a" style="left:1018px;top:221px;width:1px;height:17px;background:#fff"></div>
<div class="t" style="left:824px;top:225px;font-size:11px;letter-spacing:-0.536px;">Name</div>
<div class="t" style="left:955px;top:225px;font-size:11px;letter-spacing:0.074px;">Start</div>
<div class="t" style="left:991px;top:225px;font-size:11px;letter-spacing:-0.457px;">End</div>
<svg class="a" style="left:867px;top:227px" width="9" height="8" viewBox="0 0 9 8"><path d="M4.5 0.5L0.5 7.5H8.5" stroke="#a8a8a8" stroke-width="1" fill="none"/></svg>
<div class="t" style="left:840px;top:244px;font-size:11px;letter-spacing:-0.807px;">BALL14</div>
<div class="t" style="left:955px;top:244px;font-size:11px;letter-spacing:-0.905px;">TOP</div>
<div class="t" style="left:991px;top:244px;font-size:11px;letter-spacing:-0.905px;">TOP</div>
<div class="a" style="left:823px;top:240px;width:16px;height:16px;background:#008000"></div>
<div class="a" style="left:823px;top:246px;width:5px;height:4px;background:#000"></div>
<div class="a" style="left:823px;top:247px;width:4px;height:2px;background:#ffff00"></div>
<div class="a" style="left:827px;top:244px;width:7px;height:8px;background:#000"></div>
<div class="a" style="left:828px;top:245px;width:5px;height:6px;background:#fff"></div>
<div class="a" style="left:834px;top:243px;width:5px;height:10px;background:#000"></div>
<div class="a" style="left:835px;top:246px;width:3px;height:4px;background:#a0a0a0"></div>
<div class="a" style="left:836px;top:247px;width:2px;height:2px;background:#000"></div>
<div class="t" style="left:840px;top:261px;font-size:11px;letter-spacing:-0.675px;">BALL24P0</div>
<div class="t" style="left:955px;top:261px;font-size:11px;letter-spacing:-0.905px;">TOP</div>
<div class="t" style="left:991px;top:261px;font-size:11px;letter-spacing:-0.905px;">TOP</div>
<div class="a" style="left:823px;top:257px;width:16px;height:16px;background:#008000"></div>
<div class="a" style="left:823px;top:263px;width:5px;height:4px;background:#000"></div>
<div class="a" style="left:823px;top:264px;width:4px;height:2px;background:#ffff00"></div>
<div class="a" style="left:827px;top:261px;width:7px;height:8px;background:#000"></div>
<div class="a" style="left:828px;top:262px;width:5px;height:6px;background:#fff"></div>
<div class="a" style="left:834px;top:260px;width:5px;height:10px;background:#000"></div>
<div class="a" style="left:835px;top:263px;width:3px;height:4px;background:#a0a0a0"></div>
<div class="a" style="left:836px;top:264px;width:2px;height:2px;background:#000"></div>
<div class="t" style="left:840px;top:278px;font-size:11px;letter-spacing:-0.485px;">ID-BOARD</div>
<div class="t" style="left:955px;top:278px;font-size:11px;letter-spacing:-0.905px;">TOP</div>
<div class="t" style="left:991px;top:278px;font-size:11px;letter-spacing:-0.905px;">TOP</div>
<div class="a" style="left:823px;top:274px;width:16px;height:16px;background:#008000"></div>
<div class="a" style="left:823px;top:280px;width:5px;height:4px;background:#000"></div>
<div class="a" style="left:823px;top:281px;width:4px;height:2px;background:#ffff00"></div>
<div class="a" style="left:827px;top:278px;width:7px;height:8px;background:#000"></div>
<div class="a" style="left:828px;top:279px;width:5px;height:6px;background:#fff"></div>
<div class="a" style="left:834px;top:277px;width:5px;height:10px;background:#000"></div>
<div class="a" style="left:835px;top:280px;width:3px;height:4px;background:#a0a0a0"></div>
<div class="a" style="left:836px;top:281px;width:2px;height:2px;background:#000"></div>
<div class="t" style="left:840px;top:295px;font-size:11px;letter-spacing:-0.397px;">OB47_71X31_55D-P</div>
<div class="t" style="left:840px;top:312px;font-size:11px;letter-spacing:-0.397px;">OB47_99X31_83D-P</div>
<div class="t" style="left:840px;top:329px;font-size:11px;letter-spacing:-0.358px;">OB60_107X28_67D</div>
<div class="t" style="left:840px;top:346px;font-size:11px;letter-spacing:-0.343px;">OB60_130X28_107D</div>
<div class="t" style="left:840px;top:363px;font-size:11px;letter-spacing:-0.33px;">OB100_200X40_135D</div>
<div class="t" style="left:840px;top:380px;font-size:11px;letter-spacing:-0.33px;">OB180_100X120_40D</div>
<div class="t" style="left:840px;top:397px;font-size:11px;letter-spacing:-0.342px;">PAD24CIR24U-F</div>
<div class="a" style="left:1123px;top:219px;width:17px;height:191px;background:linear-gradient(90deg,#d8e0f4,#f4f6fc 40%,#fdfdff)"></div>
<div class="a" style="left:1123px;top:219px;width:17px;height:17px;border:1px solid #a4b4dc;border-radius:3px;background:linear-gradient(#e4ebfc,#cdd8f4 50%,#b4c4ec);box-shadow:inset 0 0 0 1px #f0f4fe"></div>
<svg class="a" style="left:1127px;top:223px" width="9" height="8" viewBox="0 0 9 8"><path d="M1.5 5.5L4.5 2.5L7.5 5.5" stroke="#485878" stroke-width="2" fill="none"/></svg>
<div class="a" style="left:1123px;top:393px;width:17px;height:17px;border:1px solid #a4b4dc;border-radius:3px;background:linear-gradient(#e4ebfc,#cdd8f4 50%,#b4c4ec);box-shadow:inset 0 0 0 1px #f0f4fe"></div>
<svg class="a" style="left:1127px;top:397px" width="9" height="8" viewBox="0 0 9 8"><path d="M1.5 2.5L4.5 5.5L7.5 2.5" stroke="#485878" stroke-width="2" fill="none"/></svg>
<div class="a" style="left:1123px;top:237px;width:17px;height:11px;border:1px solid #a4b4dc;border-radius:3px;background:linear-gradient(#f4f7ff,#d4def6 60%,#c0ceee);box-shadow:inset 0 0 0 1px #f4f7fe"></div>
<div class="a" style="left:817px;top:423px;width:324px;height:96px;border:1px solid #d4d2d8;border-radius:4px;box-shadow:inset 1px 1px 0 #f8f8fa,1px 1px 0 #f8f8fa"></div>
<div class="a" style="left:823px;top:418px;width:30px;height:12px;background:#ebe9ed"></div>
<div class="t" style="left:825px;top:419px;font-size:11px;color:#2456c8;letter-spacing:-0.191px;">Filter</div>
<div class="a" style="left:823px;top:440px;width:13px;height:13px;border:1px solid #1c5180;background:linear-gradient(135deg,#dcdcd8,#fff 70%)"></div>
<svg class="a" style="left:825px;top:442px" width="9" height="9" viewBox="0 0 9 9"><path d="M1 3.5L3.5 6L8 1.5" stroke="#21a121" stroke-width="2" fill="none"/></svg>
<div class="a" style="left:823px;top:469px;width:13px;height:13px;border:1px solid #1c5180;background:linear-gradient(135deg,#dcdcd8,#fff 70%)"></div>
<svg class="a" style="left:825px;top:471px" width="9" height="9" viewBox="0 0 9 9"><path d="M1 3.5L3.5 6L8 1.5" stroke="#21a121" stroke-width="2" fill="none"/></svg>
<div class="t" style="left:838px;top:442px;font-size:11px;letter-spacing:-0.071px;">Show vias from the <u>l</u>ibrary</div>
<div class="t" style="left:838px;top:471px;font-size:11px;letter-spacing:-0.069px;">Show vias from the <u>d</u>atabase</div>
<div class="t" style="left:822px;top:495px;font-size:11px;letter-spacing:-0.11px;"><u>F</u>ilter by name:</div>
<div class="inp" style="left:906px;top:493px;width:223px;height:20px"></div>
<div class="t" style="left:816px;top:527px;font-size:11px;letter-spacing:-0.053px;">Or enter a via name:</div>
<div class="inp" style="left:817px;top:551px;width:222px;height:20px"></div>
<div class="lv" style="left:1153px;top:218px;width:324px;height:301px"></div>
<div class="a" style="left:1154px;top:219px;width:322px;height:20px;background:#fff"></div>
<div class="a" style="left:1249px;top:221px;width:1px;height:17px;background:#d8d8dc"></div>
<div class="a" style="left:1285px;top:221px;width:1px;height:17px;background:#d8d8dc"></div>
<div class="a" style="left:1315px;top:221px;width:1px;height:17px;background:#d8d8dc"></div>
<div class="t" style="left:1160px;top:225px;font-size:11px;letter-spacing:-0.536px;">Name</div>
<div class="t" style="left:1255px;top:225px;font-size:11px;letter-spacing:0.074px;">Start</div>
<div class="t" style="left:1291px;top:225px;font-size:11px;letter-spacing:-0.457px;">End</div>
<div class="t" style="left:1176px;top:244px;font-size:11px;letter-spacing:-0.389px;">VIA10-20-GEN</div>
<div class="t" style="left:1176px;top:261px;font-size:11px;letter-spacing:-0.518px;">VIA8-BGA</div>
<div class="t" style="left:1176px;top:278px;font-size:11px;letter-spacing:-0.552px;">VIA10-GEN</div>
<div class="btn" style="left:1484px;top:219px;width:94px;height:21px;line-height:20px;letter-spacing:-0.427px;"><u>R</u>emove</div>
<div class="btn" style="left:1484px;top:254px;width:94px;height:21px;line-height:20px;letter-spacing:-1.081px;"><u>U</u>p</div>
<div class="btn" style="left:1484px;top:283px;width:94px;height:21px;line-height:20px;letter-spacing:-0.456px;"><u>D</u>own</div>
<div class="btn" style="left:1484px;top:324px;width:94px;height:21px;line-height:20px;letter-spacing:-0.947px;">OK</div>
<div class="btn" style="left:1484px;top:353px;width:94px;height:21px;line-height:20px;letter-spacing:-0.457px;">Cancel</div>
<div class="btn" style="left:1484px;top:382px;width:94px;height:21px;line-height:20px;letter-spacing:-0.156px;"><u>H</u>elp</div>
<div class="btn" style="left:1484px;top:411px;width:94px;height:21px;line-height:20px;letter-spacing:-0.311px;">Purge</div>
<div class="btn" style="left:1046px;top:552px;width:94px;height:21px;line-height:20px;letter-spacing:-0.457px;">Add</div>
<div class="btn" style="left:1286px;top:552px;width:94px;height:21px;line-height:20px;letter-spacing:-0.199px;">Viewer Options</div>
<div class="btn" style="left:1388px;top:552px;width:94px;height:21px;line-height:20px;letter-spacing:-0.314px;">Undock Viewer</div>
<div class="btn" style="left:1490px;top:552px;width:94px;height:21px;line-height:20px;letter-spacing:-0.282px;">Hide Viewer</div>
<div class="a" style="left:817px;top:580px;width:767px;height:300px;background:#9f9788;border-top:1px solid #868a90;border-left:1px solid #868a90;border-right:1px solid #fff;box-shadow:inset 1px 1px 0 #8c8e90"></div>
<div class="a" style="left:1045px;top:717px;width:174px;height:26px;background:#bcbfac"></div>
<div class="a" style="left:1045px;top:744px;width:174px;height:27px;background:#88ad00"></div>
<div class="a" style="left:1045px;top:772px;width:174px;height:26px;background:#5d4a92"></div>
<div class="a" style="left:1045px;top:800px;width:174px;height:27px;background:#88ad00"></div>
<div class="a" style="left:1045px;top:827px;width:174px;height:26px;background:#bcbfac"></div>
<div class="t mono" style="left:838px;top:720px;font-size:16.5px;white-space:pre;color:#14120e;-webkit-text-stroke:0">#1    Surface</div>
<div class="t mono" style="left:838px;top:747px;font-size:16.5px;white-space:pre;color:#14120e;-webkit-text-stroke:0">#2  TOP Conductor</div>
<div class="t mono" style="left:838px;top:775px;font-size:16.5px;white-space:pre;color:#14120e;-webkit-text-stroke:0">#3    Dielectric</div>
<div class="t mono" style="left:838px;top:803px;font-size:16.5px;white-space:pre;color:#14120e;-webkit-text-stroke:0">#4  BOTTOM Conductor</div>
<div class="t mono" style="left:838px;top:830px;font-size:16.5px;white-space:pre;color:#14120e;-webkit-text-stroke:0">#5    Surface</div>
<div class="t mono" style="left:1066.5px;top:709px;font-size:16.7px;color:#14120e;-webkit-text-stroke:0;transform-origin:0 0;transform:rotate(-90deg)">VIA10-20-GEN</div>
<div class="t mono" style="left:1124.5px;top:709px;font-size:16.7px;color:#14120e;-webkit-text-stroke:0;transform-origin:0 0;transform:rotate(-90deg)">VIA8-BGA</div>
<div class="t mono" style="left:1183.5px;top:709px;font-size:16.7px;color:#14120e;-webkit-text-stroke:0;transform-origin:0 0;transform:rotate(-90deg)">VIA10-GEN</div>
</div></body></html>
